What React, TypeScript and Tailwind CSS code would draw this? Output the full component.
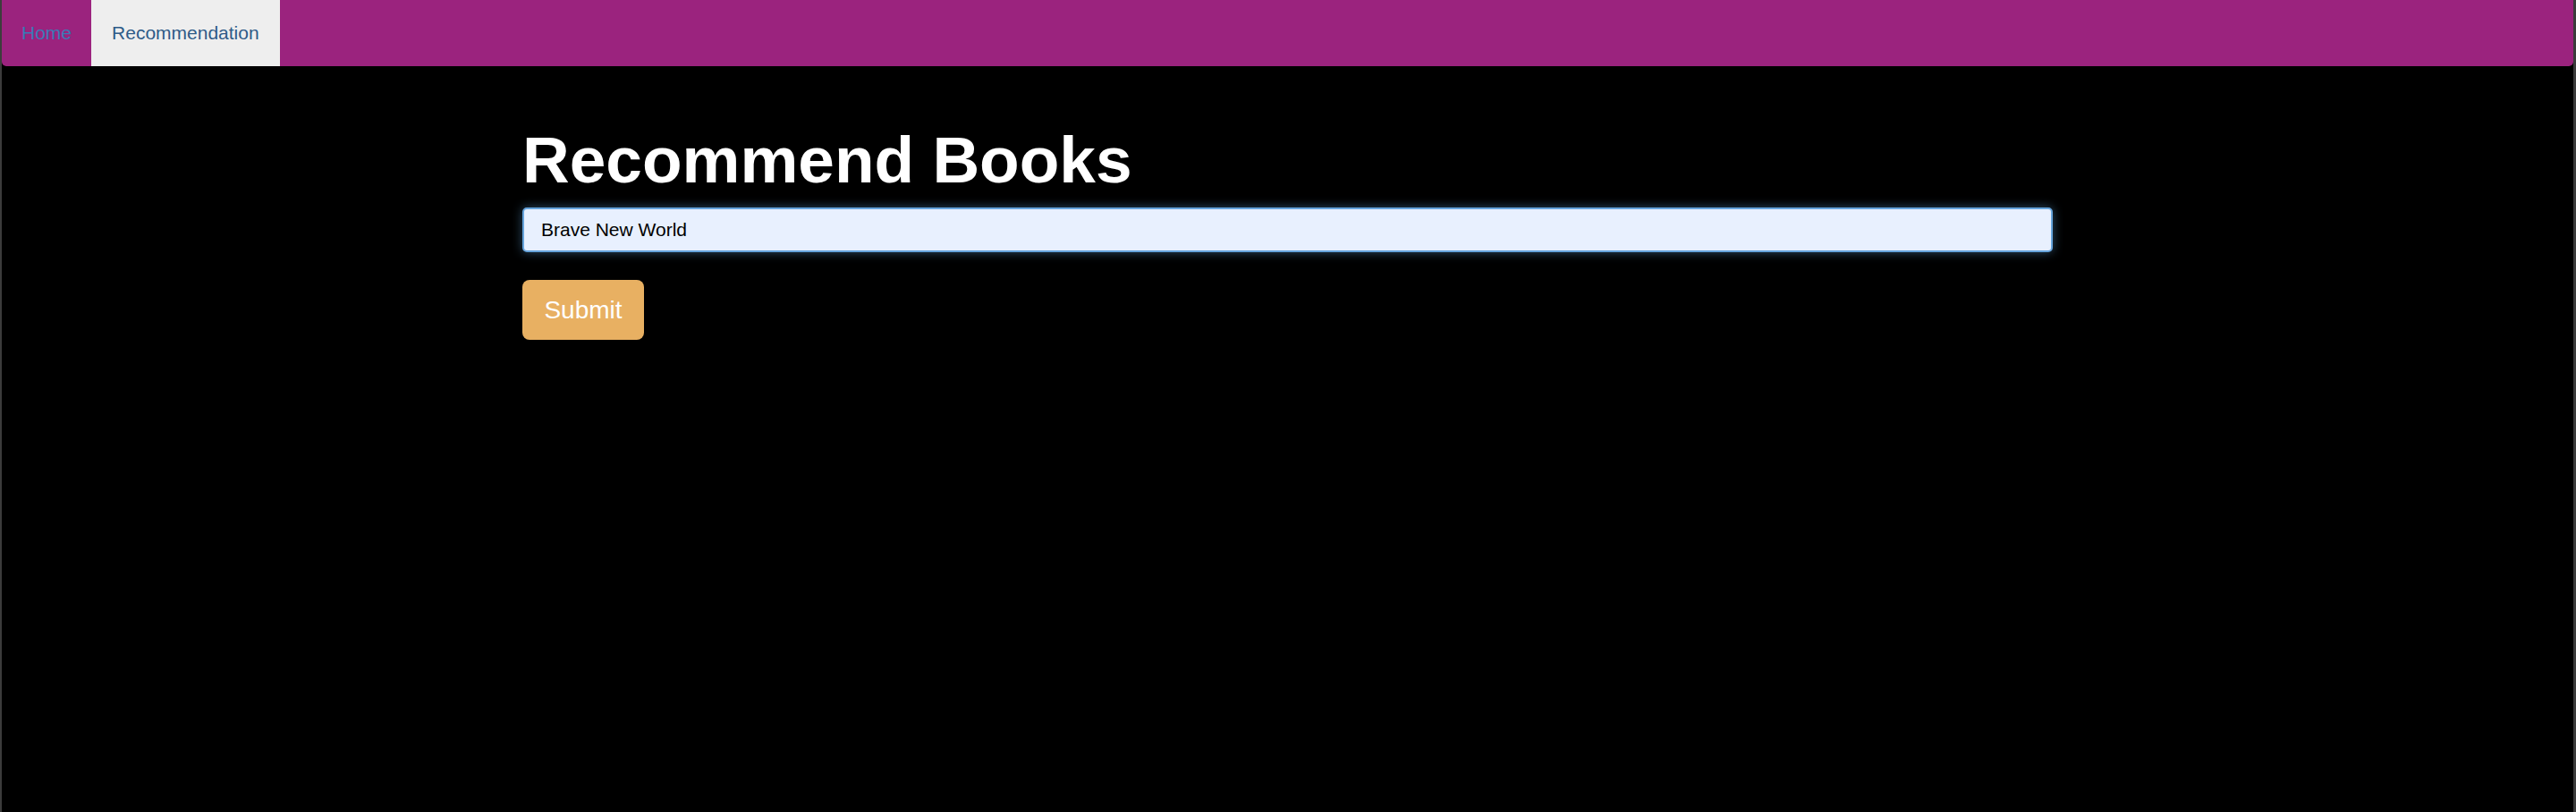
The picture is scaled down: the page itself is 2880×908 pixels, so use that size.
import React, { useState } from 'react';

const App: React.FC = () => {
  const [title, setTitle] = useState('Brave New World');

  return (
    <div
      className="min-h-[908px] bg-black border-l-2 border-r-[3px] border-[#3c3c3c]"
      style={{ fontFamily: '"Liberation Sans", Arial, sans-serif' }}
    >
      {/* Navbar */}
      <nav className="h-[74px] bg-[#9b237e] rounded-b-[5px] flex">
        <a className="h-full flex items-center px-[22px] text-[21px] text-[#3a7bb6]" href="#">
          Home
        </a>
        <a className="h-full flex items-center px-[23px] bg-[#eeeeee] text-[21px] text-[#2f5b88]" href="#">
          Recommendation
        </a>
      </nav>

      {/* Content */}
      <main className="w-[1711px] mx-auto pt-[64px]">
        <h1 className="text-[73px] leading-[81px] font-bold text-white">Recommend Books</h1>
        <form className="mt-[13px]" onSubmit={(e) => e.preventDefault()}>
          <input
            type="text"
            value={title}
            onChange={(e) => setTitle(e.target.value)}
            className="block w-full h-[50px] px-[19px] bg-[#e8f0fe] text-black text-[21px] rounded-[5px] border-2 border-[#66a4dc] outline-none shadow-[0_0_12px_rgba(102,175,233,0.45)]"
          />
          <button
            type="submit"
            className="mt-[31px] w-[136px] h-[67px] bg-[#e8b062] text-white text-[28px] rounded-[8px]"
          >
            Submit
          </button>
        </form>
      </main>
    </div>
  );
};

export default App;
